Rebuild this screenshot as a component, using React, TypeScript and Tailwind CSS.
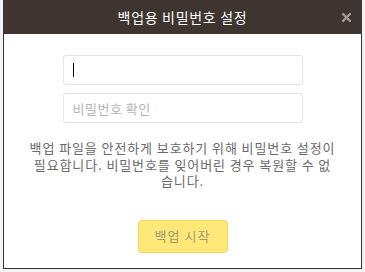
import { useState } from "react";

const font = { fontFamily: '"Noto Sans CJK KR", "Noto Sans", sans-serif' };

export default function App() {
  const [password, setPassword] = useState("");
  const [confirm, setConfirm] = useState("");

  return (
    <div
      className="h-[272px] w-[365px] overflow-hidden bg-[#f3f3f3] px-[3px]"
      style={font}
    >
      <div className="flex h-[269px] w-[359px] flex-col">
        <div className="relative flex h-[34px] shrink-0 items-center justify-center bg-[#3e3530]">
          <span className="text-[14px] leading-none tracking-[0.7px] text-white">
            백업용 비밀번호 설정
          </span>
          <button
            type="button"
            className="absolute right-[9px] top-[10px] flex h-[14px] w-[14px] items-center justify-center"
            aria-label="닫기"
          >
            <svg viewBox="0 0 12 12" className="h-[11px] w-[11px]">
              <path
                d="M1.5 1.5 L10.5 10.5 M10.5 1.5 L1.5 10.5"
                stroke="#a29a94"
                strokeWidth="2.4"
              />
            </svg>
          </button>
        </div>
        <div className="flex flex-1 flex-col items-center border-x border-b border-[#333333] bg-white pt-[21px]">
          <div className="relative">
            <input
              type="password"
              autoFocus
              value={password}
              onChange={(e) => setPassword(e.target.value)}
              className="h-[30px] w-[240px] rounded-[3px] border border-[#e4e4e4] px-[9px] text-[13px] text-[#333] caret-transparent outline-none"
            />
            {/* caret drawn by hand: headless capture drops the native one */}
            {password === "" ? (
              <span className="pointer-events-none absolute left-[10px] top-[8px] h-[14px] w-px bg-black" />
            ) : null}
          </div>
          <input
            type="password"
            placeholder="비밀번호 확인"
            value={confirm}
            onChange={(e) => setConfirm(e.target.value)}
            className="mt-[8px] h-[30px] w-[240px] rounded-[3px] border border-[#e4e4e4] px-[9px] text-[13px] tracking-[0.5px] text-[#333] outline-none placeholder:text-[#b5b5b5]"
          />
          <p className="mt-[17px] whitespace-nowrap text-center text-[13px] leading-[16.5px] tracking-[0.9px] text-[#6a6a6a]">
            백업 파일을 안전하게 보호하기 위해 비밀번호 설정이
            <br />
            필요합니다. 비밀번호를 잊어버린 경우 복원할 수 없
            <br />
            습니다.
          </p>
          <button
            type="button"
            className="mt-[30px] h-[33px] w-[90px] rounded-[4px] border border-[#f1d75e] bg-[#fee878] text-[13px] tracking-[1px] text-[#a29a70]"
          >
            백업 시작
          </button>
        </div>
      </div>
    </div>
  );
}
